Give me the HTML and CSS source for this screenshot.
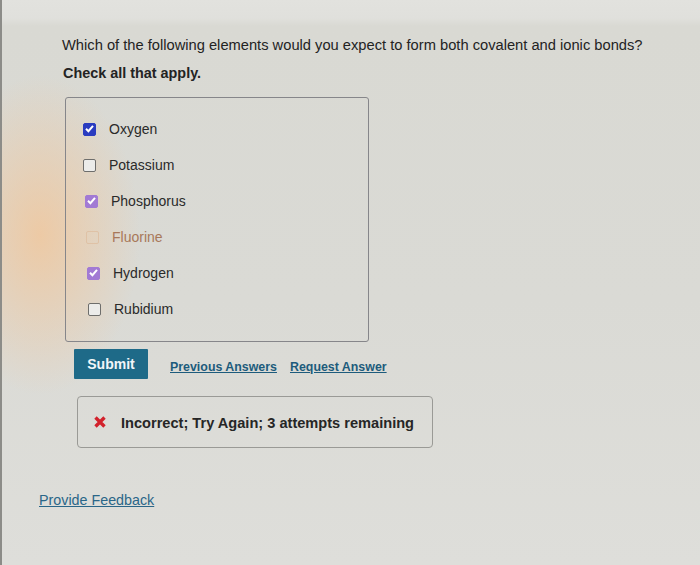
FILE: index.html
```html
<!DOCTYPE html>
<html lang="en">
<head>
<meta charset="utf-8">
<title>Question</title>
<link rel="stylesheet" href="styles.css">
</head>
<body>
<main class="page">
  <p class="question">Which of the following elements would you expect to form both covalent and ionic bonds?</p>
  <p class="instruction">Check all that apply.</p>
  <div class="choices">
    <label class="choice">
      <span class="box box-blue"><svg viewBox="0 0 13 13" width="13" height="13"><path d="M3 6.8 L5.4 9.2 L10 3.8" fill="none" stroke="#fff" stroke-width="2"/></svg></span>
      <span class="text">Oxygen</span>
    </label>
    <label class="choice">
      <span class="box"></span>
      <span class="text">Potassium</span>
    </label>
    <label class="choice">
      <span class="box box-purple"><svg viewBox="0 0 13 13" width="13" height="13"><path d="M3 6.8 L5.4 9.2 L10 3.8" fill="none" stroke="#fff" stroke-width="2"/></svg></span>
      <span class="text">Phosphorus</span>
    </label>
    <label class="choice faint">
      <span class="box"></span>
      <span class="text">Fluorine</span>
    </label>
    <label class="choice">
      <span class="box box-purple"><svg viewBox="0 0 13 13" width="13" height="13"><path d="M3 6.8 L5.4 9.2 L10 3.8" fill="none" stroke="#fff" stroke-width="2"/></svg></span>
      <span class="text">Hydrogen</span>
    </label>
    <label class="choice">
      <span class="box"></span>
      <span class="text">Rubidium</span>
    </label>
  </div>
  <div class="actions">
    <button class="submit" type="button">Submit</button>
    <a class="action-link" href="#">Previous Answers</a>
    <a class="action-link" href="#">Request Answer</a>
  </div>
  <div class="feedback">
    <svg class="x-icon" viewBox="0 0 14 14" width="14" height="14"><path d="M2.5 2.5 L11.5 11.5 M11.5 2.5 L2.5 11.5" stroke="#d2222c" stroke-width="3.4" stroke-linecap="butt"/></svg>
    <span class="feedback-text">Incorrect; Try Again; 3 attempts remaining</span>
  </div>
  <a class="provide" href="#">Provide Feedback</a>
</main>
</body>
</html>
```

FILE: styles.css
```css
html, body {
  margin: 0;
  padding: 0;
  height: 100%;
}

body {
  font-family: "Liberation Sans", Arial, sans-serif;
  color: #232323;
  background:
    radial-gradient(ellipse 100px 160px at 40px 235px, rgba(245, 195, 145, 0.7), rgba(245, 195, 145, 0) 100%),
    linear-gradient(180deg, #e2e2de 0px, #e0e0dc 18px, #d9d9d3 26px, #dadad5 300px, #dedeDA 565px);
  border-left: 2px solid #8c8c88;
  box-sizing: border-box;
  overflow: hidden;
}

.page {
  display: flex;
  flex-direction: column;
  align-items: flex-start;
  padding: 36px 0 0 60px;
}

.question {
  margin: 0;
  font-size: 14.7px;
  line-height: 18px;
}

.instruction {
  margin: 10px 0 0 1px;
  font-size: 14.4px;
  font-weight: bold;
  line-height: 18px;
}

.choices {
  margin: 15px 0 0 3px;
  width: 304px;
  height: 245px;
  box-sizing: border-box;
  border: 1px solid #86868a;
  border-radius: 3px;
  padding: 13px 0 0 17px;
  display: flex;
  flex-direction: column;
}

.choice {
  display: flex;
  align-items: center;
  gap: 13px;
  height: 36px;
  font-size: 14px;
  color: #2a2a2a;
}

.choice:nth-child(3) { padding-left: 2px; }
.choice:nth-child(4) { padding-left: 3px; }
.choice:nth-child(5) { padding-left: 4px; }
.choice:nth-child(6) { padding-left: 5px; }

.box {
  width: 13px;
  height: 13px;
  box-sizing: border-box;
  border: 1.5px solid #6e6e6c;
  border-radius: 2px;
  background: #ececea;
  display: flex;
  align-items: center;
  justify-content: center;
  position: relative;
}

.box svg {
  position: absolute;
  left: -1.5px;
  top: -1.5px;
}

.box-blue {
  background: #2a3cc0;
  border-color: #2a3cc0;
}

.box-purple {
  background: #a27ad4;
  border-color: #a27ad4;
}

.faint .box {
  border-color: #dfc2a6;
  background: transparent;
}

.faint .text {
  color: #a8785a;
}

.actions {
  margin: 7px 0 0 12px;
  display: flex;
  align-items: center;
}

.submit {
  width: 74px;
  height: 30px;
  border: none;
  border-radius: 1px;
  background: #1e6a88;
  color: #f2f6f8;
  font-family: "Liberation Sans", Arial, sans-serif;
  font-weight: bold;
  font-size: 14px;
  padding: 0;
}

.action-link {
  font-size: 12.4px;
  font-weight: bold;
  color: #1d5b7c;
  text-decoration: underline;
  margin-top: 6px;
  margin-left: 22px;
}

.action-link + .action-link {
  margin-left: 13px;
}

.feedback {
  margin: 17px 0 0 15px;
  width: 356px;
  height: 52px;
  box-sizing: border-box;
  border: 1px solid #9a9a96;
  border-radius: 4px;
  display: flex;
  align-items: center;
  padding-left: 15px;
  gap: 14px;
}

.feedback-text {
  font-size: 14.6px;
  font-weight: bold;
  color: #262626;
  margin-top: 2px;
}

.provide {
  margin: 44px 0 0 -23px;
  font-size: 14.3px;
  color: #2a6688;
  text-decoration: underline;
}
```
